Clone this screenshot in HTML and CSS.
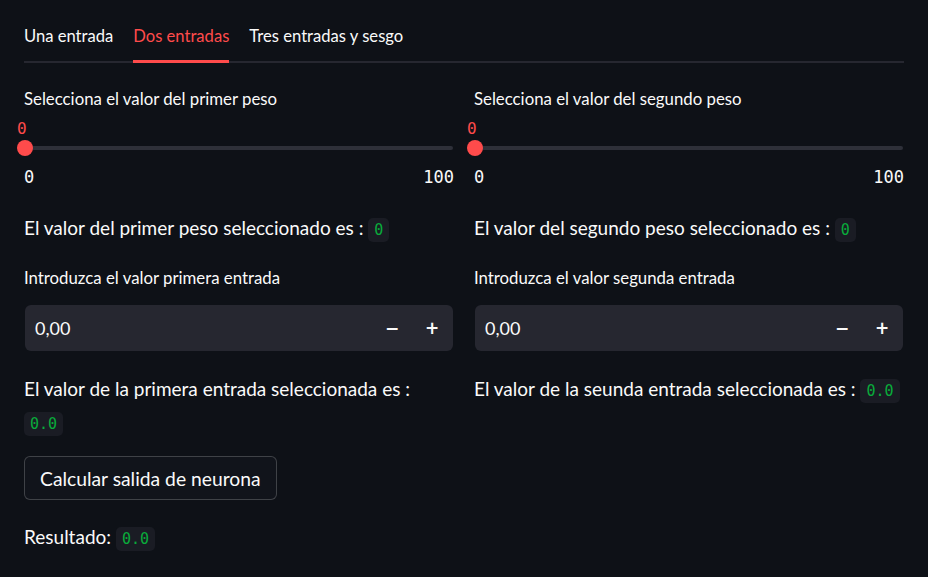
FILE: index.html
```html
<!DOCTYPE html>
<html lang="es">
<head>
<meta charset="utf-8">
<title>Neurona</title>
<link rel="stylesheet" href="styles.css">
</head>
<body>
<div class="app">
  <div class="tabs">
    <div class="tab">Una entrada</div>
    <div class="tab active">Dos entradas</div>
    <div class="tab">Tres entradas y sesgo</div>
  </div>

  <div class="cols">
    <div class="col">
      <div class="label">Selecciona el valor del primer peso</div>
      <div class="slider">
        <div class="track">
          <span class="thumb"></span>
          <span class="thumb-value">0</span>
        </div>
        <div class="ticks"><span>0</span><span>100</span></div>
      </div>
      <p class="text">El valor del primer peso seleccionado es : <code>0</code></p>
      <div class="label label2">Introduzca el valor primera entrada</div>
      <div class="numinput">
        <span class="numval">0,00</span>
        <span class="step minus">−</span>
        <span class="step plus">+</span>
      </div>
      <p class="text text-out">El valor de la primera entrada seleccionada es :<br><code>0.0</code></p>
    </div>
    <div class="col">
      <div class="label">Selecciona el valor del segundo peso</div>
      <div class="slider">
        <div class="track">
          <span class="thumb"></span>
          <span class="thumb-value">0</span>
        </div>
        <div class="ticks"><span>0</span><span>100</span></div>
      </div>
      <p class="text">El valor del segundo peso seleccionado es : <code>0</code></p>
      <div class="label label2">Introduzca el valor segunda entrada</div>
      <div class="numinput">
        <span class="numval">0,00</span>
        <span class="step minus">−</span>
        <span class="step plus">+</span>
      </div>
      <p class="text text-out">El valor de la seunda entrada seleccionada es : <code>0.0</code></p>
    </div>
  </div>

  <button class="btn">Calcular salida de neurona</button>
  <p class="text result">Resultado: <code>0.0</code></p>
</div>
</body>
</html>
```
FILE: styles.css
```css
* { box-sizing: border-box; }
html, body {
  margin: 0;
  padding: 0;
  background: #0e1117;
  color: #fafafa;
  font-family: "Lato", "Noto Sans", sans-serif;
}
.app {
  padding: 0 24px;
  width: 928px;
}
.tabs {
  display: flex;
  gap: 20px;
  padding-top: 24px;
  border-bottom: 2px solid #262730;
}
.tab {
  font-size: 16.6px;
  line-height: 24px;
  padding-bottom: 12px;
  border-bottom: 3px solid transparent;
  margin-bottom: -2px;
  color: #fafafa;
}
.tab.active {
  color: #ff4b4b;
  border-bottom-color: #ff4b4b;
}
.cols {
  display: grid;
  grid-template-columns: 430px 430px;
  column-gap: 20px;
}
.col {
  display: flex;
  flex-direction: column;
}
.label {
  font-size: 16.8px;
  line-height: 20px;
  margin-top: 26px;
}
.slider {
  padding-top: 37px;
}
.track {
  position: relative;
  height: 4px;
  border-radius: 2px;
  background: #2e3039;
  margin-left: 2px;
  margin-right: 1px;
}
.thumb {
  position: absolute;
  left: -9px;
  top: -6px;
  width: 16px;
  height: 16px;
  border-radius: 50%;
  background: #ff4b4b;
}
.thumb-value {
  position: absolute;
  left: -9px;
  top: -27px;
  font-family: "DejaVu Sans Mono", monospace;
  font-size: 16px;
  line-height: 20px;
  color: #ff4b4b;
}
.ticks {
  display: flex;
  justify-content: space-between;
  font-family: "DejaVu Sans Mono", monospace;
  font-size: 17px;
  line-height: 20px;
  margin-top: 17px;
}
.text {
  margin: 0;
  font-size: 19px;
  line-height: 32px;
}
.col .text:first-of-type {
  margin-top: 25px;
}
code {
  font-family: "DejaVu Sans Mono", monospace;
  font-size: 15px;
  color: #09ab3b;
  background: #1a1c24;
  border-radius: 5px;
  padding: 3px 6px;
}
.label2 {
  margin-top: 22px;
}
.numinput {
  margin-top: 17px;
  margin-left: 1px;
  margin-right: 1px;
  height: 46px;
  background: #262730;
  border-radius: 6px;
  display: flex;
  align-items: center;
  padding-left: 10px;
}
.numval {
  flex: 1;
  font-size: 18px;
}
.step {
  width: 40px;
  text-align: center;
  font-size: 17px;
  font-weight: 700;
  font-family: "DejaVu Sans", sans-serif;
}
.plus { margin-right: 1px; }
.text-out {
  margin-top: 21px;
  line-height: 33px;
}
.btn {
  display: block;
  margin-top: 15px;
  height: 44px;
  padding: 0 15px;
  background: #11141b;
  color: #fafafa;
  border: 1px solid rgba(250, 250, 250, 0.2);
  border-radius: 6px;
  font-family: "Lato", "Noto Sans", sans-serif;
  font-size: 19.3px;
}
.result {
  margin-top: 21px;
}
```
